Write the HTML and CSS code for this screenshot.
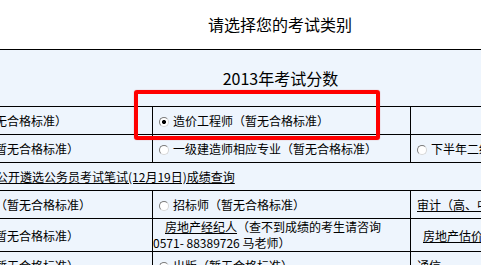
FILE: index.html
```html
<!DOCTYPE html>
<html lang="zh-CN">
<head>
    <meta charset="UTF-8">
    <title>请选择您的考试类别</title>
    <link rel="stylesheet" href="styles.css">
</head>
<body>

<div class="page">
    <h2 class="title">请选择您的考试类别</h2>

    <table class="scores">
        <colgroup>
            <col class="col-wide">
            <col class="col-mid">
            <col class="col-mid">
        </colgroup>
        <tr class="head">
            <th colspan="3">2013年考试分数</th>
        </tr>
        <tr>
            <td>翻译专业资格（暂无合格标准）</td>
            <td><label><input type="radio" name="exam" class="radio" checked>造价工程师（暂无合格标准）</label></td>
            <td></td>
        </tr>
        <tr>
            <td>注册城乡规划师（暂无合格标准）</td>
            <td><label><input type="radio" name="exam" class="radio">一级建造师相应专业（暂无合格标准）</label></td>
            <td><label><input type="radio" name="exam" class="radio">下半年二级建造师（暂无合格标准）</label></td>
        </tr>
        <tr>
            <td colspan="3" class="notice"><a href="#">公开遴选公务员考试笔试(12月19日)成绩查询</a></td>
        </tr>
        <tr>
            <td>注册核安全工程师（暂无合格标准）</td>
            <td><label><input type="radio" name="exam" class="radio">招标师（暂无合格标准）</label></td>
            <td><a href="#">审计（高、中级）</a></td>
        </tr>
        <tr class="tall">
            <td>注册安全工程师（暂无合格标准）</td>
            <td class="contact"><a href="#">房地产经纪人</a>（查不到成绩的考生请咨询<br>0571- 88389726 马老师）</td>
            <td class="shifted"><a href="#">房地产估价师</a></td>
        </tr>
        <tr>
            <td>注册环保工程师（暂无合格标准）</td>
            <td><label><input type="radio" name="exam" class="radio">出版（暂无合格标准）</label></td>
            <td>通信</td>
        </tr>
    </table>
</div>

<div class="highlight"></div>

</body>
</html>
```

FILE: styles.css
```css
body {
    margin: 0;
    background: #ffffff;
    color: #000000;
    font-family: "Noto Sans CJK SC", sans-serif;
    font-size: 12px;
    overflow: hidden;
}
.page {
    width: 776px;
    margin-left: -108px;
}
.title {
    margin: 0;
    height: 49px;
    line-height: 49px;
    text-align: center;
    font-size: 16px;
    font-weight: normal;
}
.scores {
    width: 776px;
    table-layout: fixed;
    border-collapse: collapse;
    background-color: #eef5fd;
}
.col-wide {
    width: 260px;
}
.col-mid {
    width: 258px;
}
.scores th,
.scores td {
    border: 1px solid #000000;
    height: 27px;
    padding: 0 0 0 6px;
    line-height: 15px;
    text-align: left;
    font-weight: normal;
    white-space: nowrap;
    overflow: hidden;
}
.scores .head th {
    height: 56px;
    padding: 0;
    text-align: center;
    font-size: 16px;
}
.scores .tall td {
    height: 32px;
}
.scores .notice {
    padding-left: 103px;
}
.scores .contact {
    padding-left: 0;
    text-indent: 12px;
    line-height: 16px;
}
.scores .shifted {
    padding-left: 12px;
}
.scores a {
    color: #000000;
    text-decoration: underline;
}
.radio {
    appearance: none;
    -webkit-appearance: none;
    width: 10px;
    height: 10px;
    margin: 0 4px 0 0;
    border: 1px solid;
    border-color: #7a7a7a #d6d6d6 #d6d6d6 #7a7a7a;
    border-radius: 50%;
    background: #ffffff;
    vertical-align: -1px;
}
.radio:checked {
    background: radial-gradient(circle, #000000 0 1.6px, #ffffff 2.4px);
}
.highlight {
    position: absolute;
    left: 134px;
    top: 90px;
    width: 246px;
    height: 50px;
    box-sizing: border-box;
    border: 4px solid #ff0000;
    border-radius: 3px;
    box-shadow: 0 0 1px rgba(190, 0, 0, 0.6);
}
```
